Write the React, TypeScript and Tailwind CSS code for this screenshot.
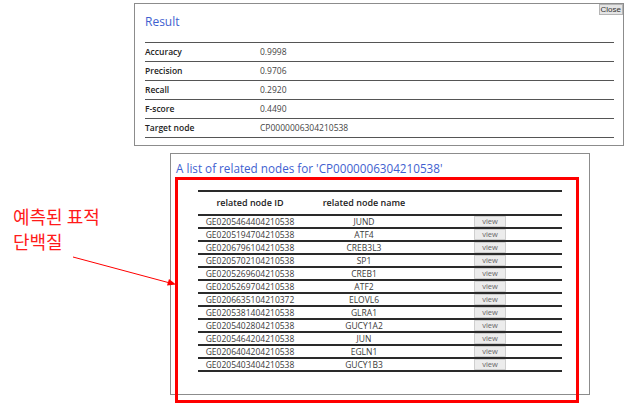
import React from "react";

const metrics: [string, string][] = [
  ["Accuracy", "0.9998"],
  ["Precision", "0.9706"],
  ["Recall", "0.2920"],
  ["F-score", "0.4490"],
  ["Target node", "CP0000006304210538"],
];

const nodes: [string, string][] = [
  ["GE0205464404210538", "JUND"],
  ["GE0205194704210538", "ATF4"],
  ["GE0206796104210538", "CREB3L3"],
  ["GE0205702104210538", "SP1"],
  ["GE0205269604210538", "CREB1"],
  ["GE0205269704210538", "ATF2"],
  ["GE0206635104210372", "ELOVL6"],
  ["GE0205381404210538", "GLRA1"],
  ["GE0205402804210538", "GUCY1A2"],
  ["GE0205464204210538", "JUN"],
  ["GE0206404204210538", "EGLN1"],
  ["GE0205403404210538", "GUCY1B3"],
];

export default function App() {
  return (
    <div className="relative w-[628px] h-[403px] bg-white overflow-hidden font-['Open_Sans',sans-serif]">
      {/* Result panel */}
      <section className="relative ml-[134px] mt-[3px] w-[490px] h-[143px] border border-[#8c8c8c] pt-[10px] px-[10px]">
        <button className="absolute right-0 top-0 h-[11px] px-[1px] bg-[#e4e4e4] border border-[#b5b5b5] text-[8px] leading-[9px] text-[#333] font-['Liberation_Sans',sans-serif]">
          Close
        </button>
        <h2 className="text-[12px] leading-[16px] text-[#3f5fd0]">Result</h2>
        <div className="mt-[12px] w-[469px] border-t border-[#555]">
          {metrics.map(([k, v]) => (
            <div key={k} className="flex h-[19px] items-center border-b border-[#555]">
              <div className="w-[115px] text-[8.5px] font-semibold text-[#222]">{k}</div>
              <div className="text-[8.5px] text-[#444]">{v}</div>
            </div>
          ))}
        </div>
      </section>

      <div className="flex mt-[7px]">
        <div className="w-[170px] pt-[51px] pl-[13px] text-[18px] leading-[25px] text-[#ff1a1a] font-['Noto_Sans_CJK_KR',sans-serif]">
          <div>예측된 표적</div>
          <div>단백질</div>
        </div>
        <section className="w-[420px] h-[242px] border border-[#8c8c8c] pt-[6px] pl-[5px]">
          <h3 className="text-[11.7px] leading-[16px] font-medium text-[#3f5fd0]">
            A list of related nodes for 'CP0000006304210538'
          </h3>
          <div className="mt-[14px] ml-[22px] w-[364px]">
            <div className="grid grid-cols-[104px_124px_128px_1fr] h-[26px] items-center border-y-2 border-[#2a2a2a] text-[9px] font-semibold text-[#222]">
              <div className="text-center">related node ID</div>
              <div className="text-center">related node name</div>
              <div />
              <div />
            </div>
            {nodes.map(([id, name]) => (
              <div
                key={id}
                className="grid grid-cols-[104px_124px_128px_1fr] h-[13px] items-center border-b-2 border-[#2a2a2a] text-[8.5px] leading-[11px] text-[#3a3a3a]"
              >
                <div className="text-center">{id}</div>
                <div className="text-center">{name}</div>
                <div className="flex justify-center">
                  <span className="w-[32px] h-[11px] bg-[#ececec] border border-[#cfcfcf] text-center text-[7.5px] leading-[9px] text-[#666]">
                    view
                  </span>
                </div>
                <div />
              </div>
            ))}
          </div>
        </section>
      </div>

      {/* annotation overlay */}
      <div className="absolute left-[175px] top-[177px] w-[404px] h-[226px] border-[3px] border-[#ff0000]" />
      <svg className="absolute left-0 top-0" width="628" height="403" viewBox="0 0 628 403">
        <line x1="73" y1="257" x2="170" y2="283" stroke="#ff0000" strokeWidth="1" />
        <polygon points="176,284.5 167,285.5 169,279" fill="#ff0000" />
      </svg>
    </div>
  );
}
